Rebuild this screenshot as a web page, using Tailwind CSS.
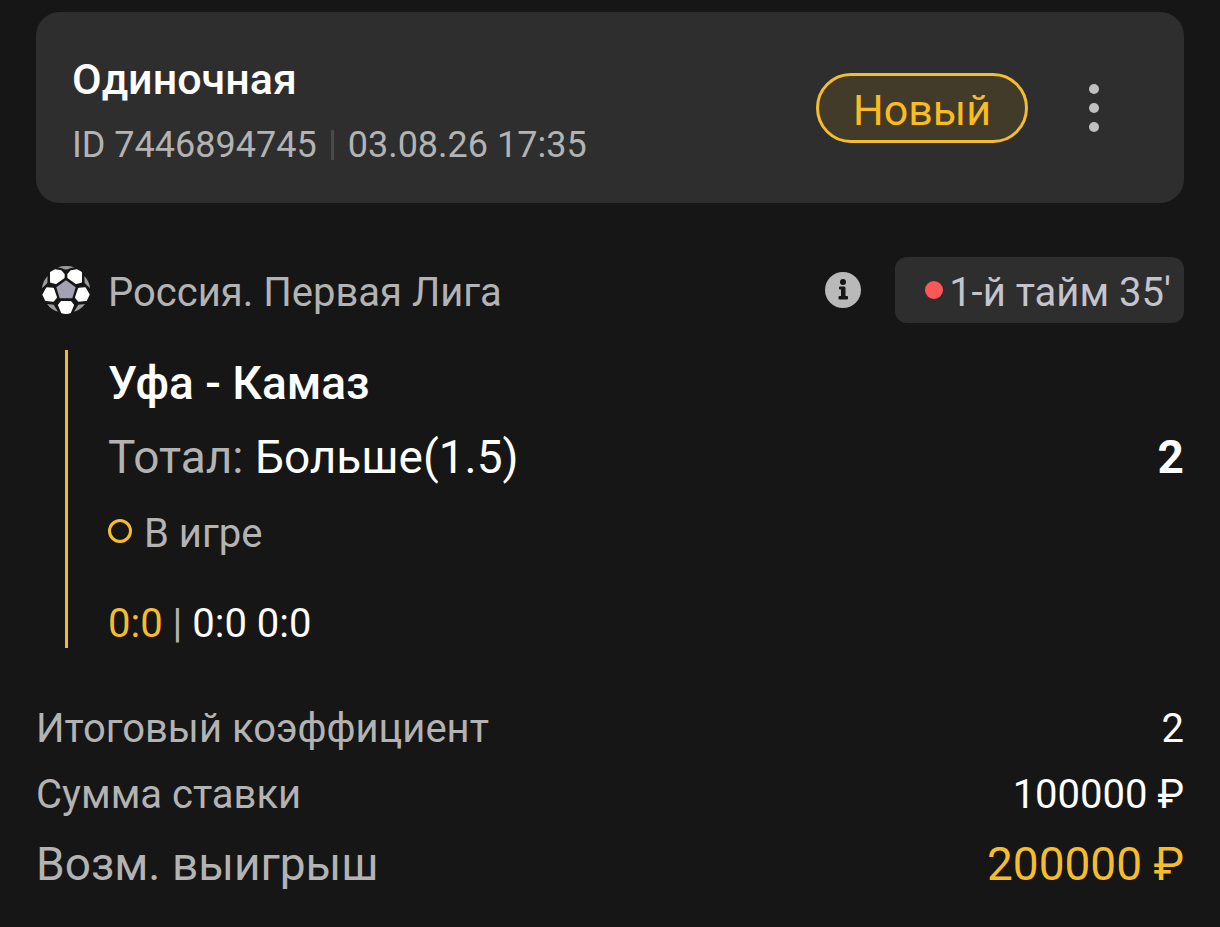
<!DOCTYPE html>
<html lang="ru">
<head>
<meta charset="utf-8">
<meta name="viewport" content="width=device-width, initial-scale=1">
<title>Одиночная ставка</title>
<script src="https://cdn.jsdelivr.net/npm/@tailwindcss/browser@4"></script>
</head>
<body class="min-h-screen bg-[#161616] px-9 pt-3 pb-6 font-['Roboto',sans-serif] text-[#b3b3b3]">
<main>
  <header class="flex items-center rounded-3xl bg-[#2e2e2e] py-[34px] pr-21 pl-9">
    <div class="flex-1">
      <h1 class="text-[43px] leading-[66px] font-medium text-white">Одиночная</h1>
      <p class="flex items-center pt-[9px] text-[36px] leading-12"><span>ID 7446894745</span><span class="mx-3.5 h-[30px] w-[3px] bg-[#4a4a4a]"></span><time>03.08.26 17:35</time></p>
    </div>
    <span class="rounded-full border-3 border-[#f5bd2d] bg-[#423b29] px-[34px] pt-1 text-[43px] leading-15 text-[#fbbc1f]">Новый</span>
    <button type="button" aria-label="Меню" class="ml-15">
      <svg class="h-12 w-3" viewBox="0 0 12 48" fill="#c0c0c0"><circle cx="6" cy="5" r="5"/><circle cx="6" cy="24" r="5"/><circle cx="6" cy="43" r="5"/></svg>
    </button>
  </header>

  <section class="mt-[54px]">
    <div class="flex items-center">
      <svg class="ml-1.5 size-12" viewBox="36 33 144 144" aria-hidden="true">
        <g fill="#9c9ca0">
          <path d="M83 37Q108 29 133 37L120 40Q108 47 96 40Z"/>
          <path d="M163 63Q178 79 180 100L172 92L164 84Z"/>
          <path d="M53 63Q38 79 36 100L44 92L52 84Z"/>
          <path d="M51 147L71 149L84 170Q63 164 51 147Z"/>
          <path d="M165 147L145 149L132 170Q153 164 165 147Z"/>
        </g>
        <path d="M108 76L137 97L127 130H89L79 97Z" fill="#a2a2b2"/>
        <g fill="#fff" stroke="#fff" stroke-width="6" stroke-linejoin="round">
          <path d="M63 53L75 46L93 49L101 58V67L78 84L63 80Z"/>
          <path d="M153 53L141 46L123 49L115 58V67L138 84L153 80Z"/>
          <path d="M40 119L51 100L69 101L78 127L70 137L48 135Z"/>
          <path d="M176 119L165 100L147 101L138 127L146 137L168 135Z"/>
          <path d="M87 150L94 141H122L129 150L120 172Q108 176 96 172Z"/>
        </g>
      </svg>
      <h2 class="ml-4.5 flex-1 pt-1.5 text-[40px] leading-14">Россия. Первая Лига</h2>
      <button type="button" aria-label="Информация">
        <svg class="size-9" viewBox="0 0 36 36"><circle cx="18" cy="18" r="18" fill="#b9b9b9"/><g fill="#161616"><circle cx="18" cy="10" r="3"/><path d="M14 15.500Q14 14.500 15 14.500H19Q20.500 14.500 20.500 16V24H22Q23 24 23 25V26.500Q23 27.500 22 27.500H14.500Q13.500 27.500 13.500 26.500V25Q13.500 24 14.500 24H16V17.500H15Q14 17.500 14 16.500Z"/></g></svg>
      </button>
      <span class="ml-[34px] flex h-[66px] items-center gap-1.5 rounded-xl bg-[#2e2e2e] pr-[13px] pl-[30px] text-[40px] leading-14 text-[#c5c3cb]"><i class="size-[18px] rounded-full bg-[#ff5757]"></i><span class="pt-1.5">1-й тайм 35'</span></span>
    </div>
    <div class="mt-[27px] ml-[29px] border-l-3 border-[#efb840] pl-10">
      <h3 class="text-[46px] leading-[66px] font-medium text-white">Уфа - Камаз</h3>
      <p class="flex justify-between text-[46px] leading-[82px]"><span>Тотал: <span class="text-white">Больше(1.5)</span></span><b class="font-bold text-white">2</b></p>
      <p class="flex items-center gap-3 text-[40px] leading-18"><i class="mb-1.5 size-6 rounded-full border-3 border-[#f5bd2d]"></i>В игре</p>
      <p class="pt-[30px] text-[40px] leading-12 text-white"><span class="text-[#f5bd2d]">0:0</span> <span class="text-[#b3b3b3]">|</span> 0:0 0:0</p>
    </div>
  </section>

  <dl class="mt-12">
    <div class="flex justify-between text-[40px] leading-[66px]"><dt>Итоговый коэффициент</dt><dd class="text-white">2</dd></div>
    <div class="flex justify-between text-[40px] leading-[66px]"><dt>Сумма ставки</dt><dd class="text-white">100000 ₽</dd></div>
    <div class="flex justify-between text-[46px] leading-18"><dt>Возм. выигрыш</dt><dd class="text-[#f5bd2d]">200000 ₽</dd></div>
  </dl>
</main>
</body>
</html>
